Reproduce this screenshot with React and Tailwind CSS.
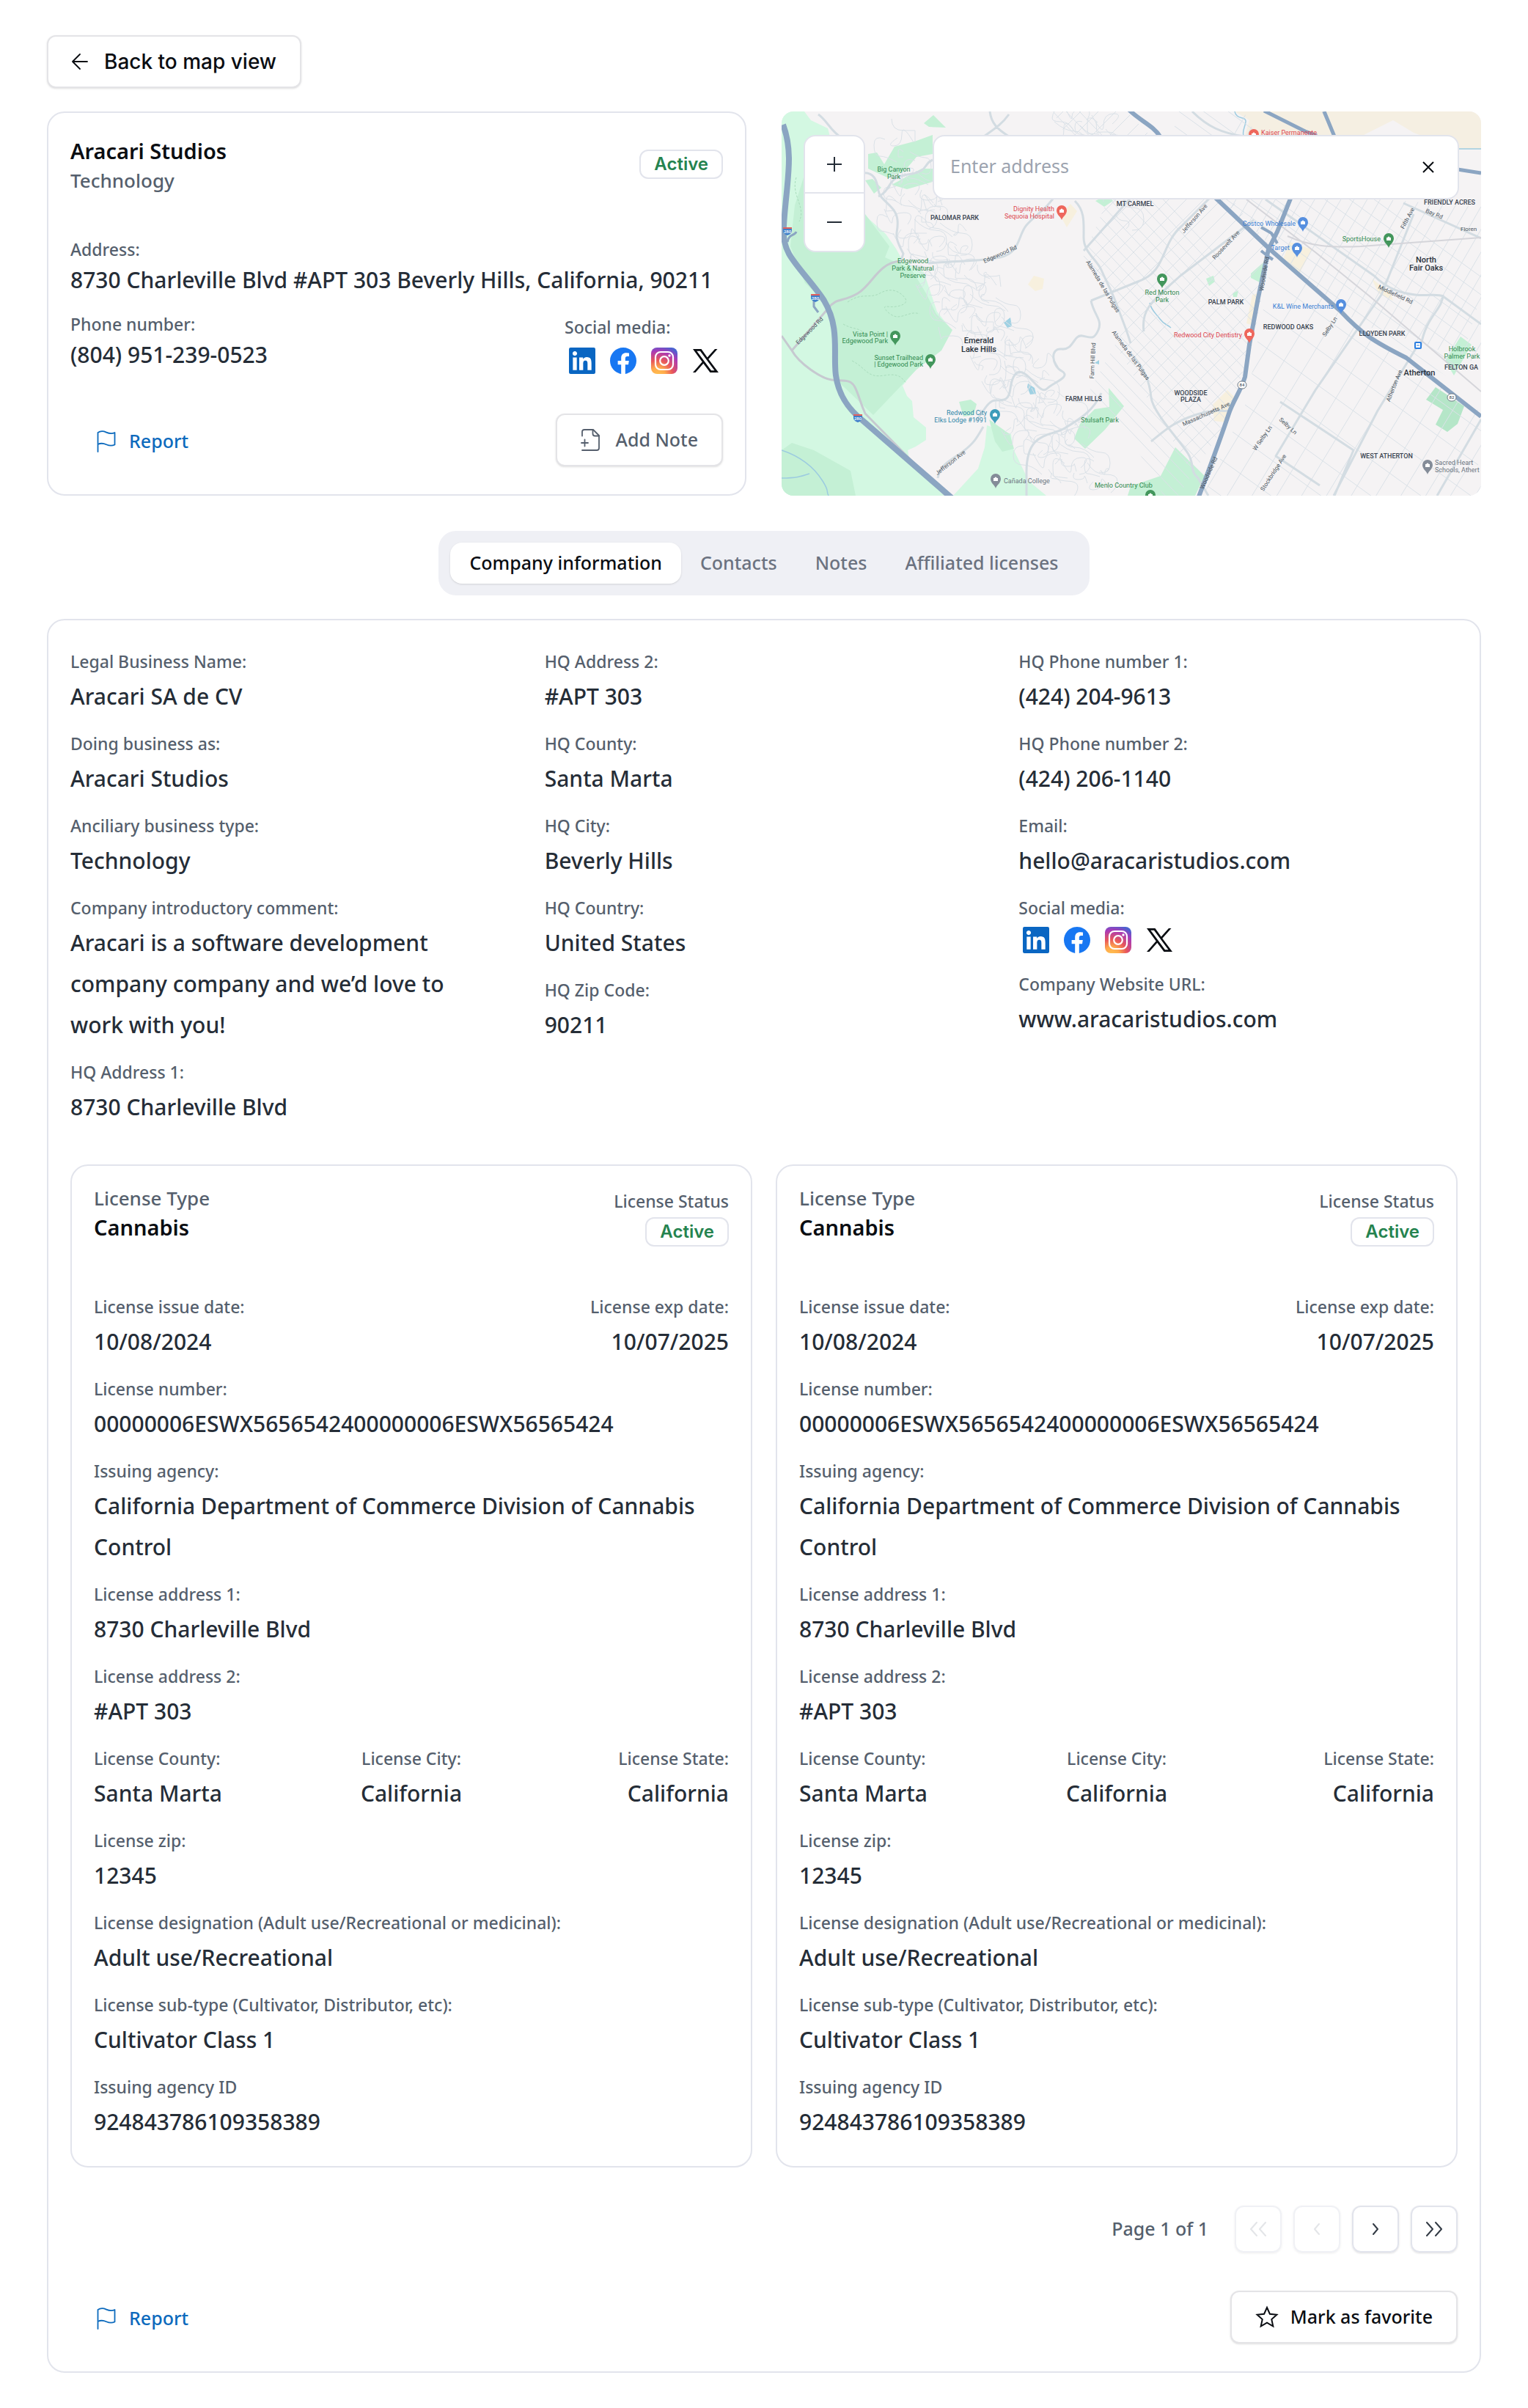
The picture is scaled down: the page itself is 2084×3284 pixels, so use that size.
import { useState } from 'react';

const company = {
    name: 'Aracari Studios',
    type: 'Technology',
    address: '8730 Charleville Blvd #APT 303 Beverly Hills, California, 90211',
    phone: '(804) 951-239-0523',
};

const tabs = ['Company information', 'Contacts', 'Notes', 'Affiliated licenses'];

const firstColumn = [
    ['Legal Business Name:', 'Aracari SA de CV'],
    ['Doing business as:', 'Aracari Studios'],
    ['Anciliary business type:', 'Technology'],
    ['Company introductory comment:', 'Aracari is a software development company company and we’d love to work with you!'],
    ['HQ Address 1:', '8730 Charleville Blvd'],
];

const secondColumn = [
    ['HQ Address 2:', '#APT 303'],
    ['HQ County:', 'Santa Marta'],
    ['HQ City:', 'Beverly Hills'],
    ['HQ Country:', 'United States'],
    ['HQ Zip Code:', '90211'],
];

const thirdColumn = [
    ['HQ Phone number 1:', '(424) 204-9613'],
    ['HQ Phone number 2:', '(424) 206-1140'],
    ['Email:', 'hello@aracaristudios.com'],
];

const license = {
    type: 'Cannabis',
    status: 'Active',
    issued: '10/08/2024',
    expires: '10/07/2025',
    number: '00000006ESWX5656542400000006ESWX56565424',
    agency: 'California Department of Commerce Division of Cannabis Control',
    address1: '8730 Charleville Blvd',
    address2: '#APT 303',
    county: 'Santa Marta',
    city: 'California',
    state: 'California',
    zip: '12345',
    designation: 'Adult use/Recreational',
    subType: 'Cultivator Class 1',
    agencyId: '924843786109358389',
};

const licenses = [{ id: 1, ...license }, { id: 2, ...license }];

/* ---------- icons ---------- */

const ArrowIcon = () => (
    <svg width="22" height="22" viewBox="0 0 22 22" fill="none" stroke="currentColor" strokeWidth="1.8" strokeLinecap="round" strokeLinejoin="round">
        <path d="M21 11H1M11 1 1 11l10 10" />
    </svg>
);

const FlagIcon = () => (
    <svg width="26" height="30" viewBox="0 0 26 30" fill="none" stroke="currentColor" strokeWidth="1.8" strokeLinecap="round" strokeLinejoin="round">
        <path d="M1.5 29V3C5 .6 9 .8 13 2.6S20.5 5 24.5 3v16.5c-4 2-7.500 1.500-11.500-.3s-8-2-11.500-.2" />
    </svg>
);

const NoteIcon = () => (
    <svg width="26" height="30" viewBox="0 0 26 30" fill="none" stroke="currentColor" strokeWidth="1.8" strokeLinecap="round" strokeLinejoin="round">
        <path d="M2 9.500V4a3 3 0 0 1 3-3h12l8 8v17a3 3 0 0 1-3 3H2" />
        <path d="M16.500 1v5.500a3 3 0 0 0 3 3H25M1 19h9M5.500 14.500v9" />
    </svg>
);

const StarIcon = () => (
    <svg width="32" height="32" viewBox="0 0 32 32" fill="none" stroke="currentColor" strokeWidth="2" strokeLinejoin="miter">
        <path d="m16 3 3.900 8.700 9.500 1-7.100 6.400 2 9.400-8.300-4.800-8.300 4.800 2-9.400-7.100-6.400 9.500-1z" />
    </svg>
);

const Chevron = ({ double, left }) => (
    <svg width="24" height="24" viewBox="0 0 24 24" fill="none" stroke="currentColor" strokeWidth="2" strokeLinecap="round" strokeLinejoin="round" className={left ? 'rotate-180' : ''}>
        <path d={double ? 'm2 3 8 9-8 9M14 3l8 9-8 9' : 'm9 5 6 7-6 7'} />
    </svg>
);

const LinkedinIcon = () => (
    <svg width="36" height="36" viewBox="0 0 24 24">
        <rect width="24" height="24" rx="1.5" fill="#0a66c2" />
        <path fill="#fff" d="M20.447 20.452h-3.554v-5.569c0-1.328-.027-3.037-1.852-3.037-1.853 0-2.136 1.445-2.136 2.939v5.667H9.351V9h3.414v1.561h.046c.477-.9 1.637-1.850 3.370-1.850 3.601 0 4.267 2.370 4.267 5.455v6.286zM5.337 7.433c-1.144 0-2.063-.926-2.063-2.065 0-1.138.92-2.063 2.063-2.063 1.140 0 2.064.925 2.064 2.063 0 1.139-.925 2.065-2.064 2.065zm1.782 13.019H3.555V9h3.564v11.452z" />
    </svg>
);

const FacebookIcon = () => (
    <svg width="36" height="36" viewBox="0 0 24 24">
        <path fill="#1877f2" d="M24 12.073c0-6.627-5.373-12-12-12s-12 5.373-12 12c0 5.990 4.388 10.954 10.125 11.854v-8.385H7.078v-3.470h3.047V9.430c0-3.007 1.792-4.669 4.533-4.669 1.312 0 2.686.235 2.686.235v2.953H15.830c-1.491 0-1.956.925-1.956 1.874v2.250h3.328l-.532 3.470h-2.796v8.385C19.612 23.027 24 18.062 24 12.073z" />
    </svg>
);

const InstagramIcon = () => (
    <svg width="36" height="36" viewBox="0 0 36 36" fill="none">
        <defs>
            <radialGradient id="insta" cx="0.25" cy="1.05" r="1.15">
                <stop offset="0" stopColor="#ffc050" />
                <stop offset="0.25" stopColor="#ffaa4c" />
                <stop offset="0.5" stopColor="#e8565a" />
                <stop offset="0.8" stopColor="#a83ab8" />
                <stop offset="1" stopColor="#4a62d0" />
            </radialGradient>
        </defs>
        <rect width="36" height="36" rx="8" fill="url(#insta)" />
        <rect x="6" y="6" width="24" height="24" rx="7" stroke="#fff" strokeWidth="2.2" />
        <circle cx="18" cy="18" r="5.8" stroke="#fff" strokeWidth="2.2" />
        <circle cx="25" cy="11" r="1.7" fill="#fff" />
    </svg>
);

const XIcon = () => (
    <svg width="36" height="36" viewBox="0 0 36 36">
        <path fill="#0a0d12" fillRule="evenodd" d="M1 2h11.500l8.200 11.400L31 2h3.500L22.300 15.800 36 34H24.500l-9.200-12.300L4.500 34H1l12.700-14.500zm5.300 2.700L26 31.300h4.500L10.900 4.700z" />
    </svg>
);

const socials = [
    ['LinkedIn', LinkedinIcon],
    ['Facebook', FacebookIcon],
    ['Instagram', InstagramIcon],
    ['X', XIcon],
];

const SocialLinks = () => (
    <div className="flex gap-2">
        {socials.map(([name, Icon]) => (
            <a key={name} href="#" aria-label={name} className="flex size-12 items-center justify-center">
                <Icon />
            </a>
        ))}
    </div>
);

/* ---------- map ---------- */

// [text, x, y, kind, anchor, rotation]
const mapLabels = [
    ['Big Canyon', 153, 82, 'park'],
    ['Park', 153, 92, 'park'],
    ['PALOMAR PARK', 236, 148, 'area'],
    ['Dignity Health', 372, 136, 'health', 'end'],
    ['Sequoia Hospital', 372, 146, 'health', 'end'],
    ['MT CARMEL', 482, 129, 'area'],
    ['Edgewood', 179, 207, 'park'],
    ['Park & Natural', 179, 217, 'park'],
    ['Preserve', 179, 227, 'park'],
    ['Vista Point |', 145, 307, 'park', 'end'],
    ['Edgewood Park', 145, 316, 'park', 'end'],
    ['Sunset Trailhead', 193, 339, 'park', 'end'],
    ['| Edgewood Park', 193, 348, 'park', 'end'],
    ['Emerald', 269, 316, 'town'],
    ['Lake Hills', 269, 328, 'town'],
    ['FARM HILLS', 412, 395, 'area'],
    ['Stulsaft Park', 434, 424, 'park'],
    ['Redwood City', 280, 414, 'teal', 'end'],
    ['Elks Lodge #1991', 280, 424, 'teal', 'end'],
    ['Cañada College', 303, 507, 'school', 'start'],
    ['Menlo Country Club', 427, 513, 'park', 'start'],
    ['Kaiser Permanente', 654, 32, 'health', 'start'],
    ['Red Morton', 519, 250, 'park'],
    ['Park', 519, 260, 'park'],
    ['Costco Wholesale', 701, 156, 'shop', 'end'],
    ['Target', 693, 189, 'shop', 'end'],
    ['SportsHouse', 817, 177, 'park', 'end'],
    ['North', 879, 206, 'town'],
    ['Fair Oaks', 879, 217, 'town'],
    ['FRIENDLY ACRES', 911, 127, 'area'],
    ['PALM PARK', 606, 263, 'area'],
    ['K&L Wine Merchants', 753, 269, 'shop', 'end'],
    ['REDWOOD OAKS', 691, 297, 'area'],
    ['Redwood City Dentistry', 628, 308, 'health', 'end'],
    ['LLOYDEN PARK', 819, 306, 'area'],
    ['Holbrook', 928, 327, 'park'],
    ['Palmer Park', 928, 337, 'park'],
    ['FELTON GA', 904, 352, 'area', 'start'],
    ['Atherton', 870, 360, 'town'],
    ['WOODSIDE', 558, 387, 'area'],
    ['PLAZA', 558, 396, 'area'],
    ['WEST ATHERTON', 825, 473, 'area'],
    ['Sacred Heart', 891, 482, 'school', 'start'],
    ['Schools, Athert', 891, 492, 'school', 'start'],
    ['Edgewood Rd', 299, 197, 'road', 'middle', -24],
    ['Edgewood Rd', 40, 301, 'road', 'middle', -45],
    ['Alameda de las Pulgas', 436, 240, 'road', 'middle', 59],
    ['Alameda de las Pulgas', 474, 334, 'road', 'middle', 54],
    ['Farm Hill Blvd', 427, 340, 'road', 'middle', -87],
    ['Jefferson Ave', 232, 481, 'road', 'middle', -38],
    ['Jefferson Ave', 565, 148, 'road', 'middle', -49],
    ['Roosevelt Ave', 608, 184, 'road', 'middle', -47],
    ['Bay Rd', 889, 142, 'road', 'middle', 22],
    ['Fifth Ave', 856, 147, 'road', 'middle', -62],
    ['Floren', 926, 163, 'road', 'start'],
    ['Middlefield Rd', 836, 252, 'road', 'middle', 25],
    ['Selby Ln', 750, 295, 'road', 'middle', -57],
    ['Atherton Ave', 838, 375, 'road', 'middle', -68],
    ['Massachusetts Ave', 580, 415, 'road', 'middle', -24],
    ['Selby Ln', 689, 431, 'road', 'middle', 42],
    ['W Selby Ln', 658, 447, 'road', 'middle', -55],
    ['Stockbridge Ave', 673, 494, 'road', 'middle', -57],
    ['Woodside Rd', 585, 494, 'road', 'middle', -66],
    ['Woodside Rd', 661, 222, 'road', 'middle', -80],
];

const labelStyles = {
    park: 'fill-[#2f8a4e] text-[9px]',
    health: 'fill-[#dc4650] text-[9px]',
    shop: 'fill-[#3b7fd4] text-[9px]',
    teal: 'fill-[#2f86a8] text-[9px]',
    school: 'fill-[#6b7480] text-[9px]',
    area: 'fill-[#3a4450] text-[9px] font-medium',
    town: 'fill-[#2a323c] text-[11px] font-medium',
    road: 'fill-[#4b5560] text-[8px]',
};

const pins = [
    [382, 135, '#ee675c'],
    [155, 306, '#43965c'],
    [203, 338, '#43965c'],
    [291, 413, '#3d9cba'],
    [292, 501, '#848c98'],
    [644, 31, '#ee675c'],
    [519, 228, '#43965c'],
    [711, 151, '#568fdf'],
    [703, 186, '#568fdf'],
    [828, 173, '#43965c'],
    [763, 263, '#568fdf'],
    [638, 303, '#ee675c'],
    [881, 482, '#848c98'],
    [503, 523, '#43965c'],
];

const Pin = ({ x, y, color }) => (
    <g transform={`translate(${x} ${y})`}>
        <path d="M0 13C-1.500 8-7 6-7 0a7 7 0 0 1 14 0c0 6-5.500 8-7 13z" fill={color} />
        <path d="M-3 3V-1h1.500a1.500 1.500 0 0 1 3 0H3v4z" fill="#fff" />
    </g>
);

const range = (n) => Array.from({ length: n }, (_, i) => i);

// Parallel streets running at a fixed slope through one part of town
const streets = (count, x, y, dx, dy, stepX, stepY) =>
    range(count).map((i) => `M${x + i * stepX} ${y + i * stepY}l${dx} ${dy}`).join('');

// Short winding lanes of the hill neighbourhoods
const lanes = range(170).map((i) => {
    const x = 150 + ((i * 67) % 310);
    const y = 10 + ((i * 109) % 500);
    const a = Math.round(Math.sin(i * 1.7) * 16);
    const b = Math.round(Math.cos(i * 2.3) * 16);
    return `M${x} ${y}q${a} ${b} ${a + b} ${b}t${b} ${a}t${-a} ${b}`;
}).join('');

const MapDrawing = () => (
    <svg viewBox="0 0 954 524" preserveAspectRatio="xMidYMid slice" className="absolute inset-0 size-full font-[Roboto,sans-serif]" role="img" aria-label="Map of Redwood City">
        <defs>
            <clipPath id="west">
                <path d="M370 0h100l40 40 100 75 57 70-24 130-40 115-62 94h-20l-40-70-60-75 50-90-60-90 30-70z" />
            </clipPath>
            <clipPath id="east">
                <path d="m670 195 95 85 90 60 99 70v114H575l60-130z" />
            </clipPath>
            <clipPath id="north">
                <path d="M470 0h160l60 110 264 20v260L760 270 600 120z" />
            </clipPath>
        </defs>
        <rect width="954" height="524" fill="#f5f3f4" />
        <path d="M0 0h31l9 12 23 11 3 11 48 30v78l28 25 14 20 10 18 28 14 18 54 20 25-15 28-34 26-18 22 6 14 7 7 2 22 17 14v17l-14 9-11 5 2 11 57 51H0z" fill="#d3f8e2" />
        <path d="m234 524 34-37 9-29 3-30 33 12 2 18 22 46 24 20z" fill="#d3f8e2" />
        <g fill="#c4f0d5">
            <path d="m18 128 12-38 84 50 33 44-6 15 36 16 20 33 14 28 22 22-15 28-34 26-59 62-46-44-10-101-37-35-20-50z" />
            <path d="m118 58 12-2 10 16 14-24 30-8 22-8v26l-22 4-17 20-23 8-26-12zM150 100l41-22h15v18l-35 10zM194 16l13-11 17 17-23-1zM114 94l10-2 12 12-10 8z" />
            <path d="m0 462 14-10 30 10 50 28 7 34H0zM446 377l21 25-26 32-27 26-15-14 8-20 20-20 20-3zM242 396l16-3 8 6-4 15-14 2zM283 420l28 20 6 20-16 4-10-14zM428 122l16-8 8 8-12 8z" />
            <path d="m537 458 40 39-13 27h-92l4-13 41-14zM926 307l15 11-24 42-12-20zM640 221l18-16-2 30-16-8zM671 21l20-4 20 10-10 8h-34zM579 228l10-4 2 8-8 6zM615 248l8-4-2 9h-5z" />
        </g>
        <path d="m892 376 39 26-9 24-14 11-16-10 10-20-23-14z" fill="#b5e6c8" />
        <path d="M618 0h336v51h-32l-60-22-28-17-40 20H632l6-20z" fill="#f5efe2" />
        <path d="m693 178 30 10-17 34-23-18zM642 250l8-2-4 45-12-4zM588 400l20-20 10 10-12 34-16-2zM380 142l14-16 9 10-14 22zM336 236l8-12 14 4-2 14-10 3zM805 228l26 20 3 10-20-10z" fill="#f7f0de" />
        <path d="m303 288 9-7 2 12-6 2zM336 371l9 6 2 8-8 1-4-10zM427 343l6-4v6z" fill="#9fd1e3" />
        <path d="M618 0c2 12 16 6 15 14s-5 12-3 19M502 261c2 10 8 14 14 22s8 6 15 12M0 462c30 10 46 26 56 42s4 12 8 20M0 500c20 0 26-2 38-6M922 51h32" fill="none" stroke="#9ccbe0" strokeWidth="1.5" />

        <g fill="none" stroke="#dae1e7">
            <path d={lanes} strokeWidth="1" />
            <g clipPath="url(#west)" strokeWidth="1">
                <path d={streets(44, 330, -80, 400, 420, -2, 17)} />
                <path d={streets(46, 300, 60, 300, -300, 9, 15)} />
            </g>
            <g clipPath="url(#east)" strokeWidth="1">
                <path d={streets(12, 600, 180, 360, 260, -10, 42)} />
                <path d={streets(15, 540, 524, 200, -330, 29, 8)} />
            </g>
            <g clipPath="url(#north)" strokeWidth="1">
                <path d={streets(16, 560, -60, 400, 290, -6, 20)} />
                <path d={streets(32, 520, 200, 150, -260, 15, 5)} />
            </g>
        </g>
        <path d="M20 90c-8 24 14 40 4 60M90 260c20-14 30-4 44-12s26-4 34 6-14 14-24 12 4 14 14 14 20-8 30-4M84 290c14 8 20 4 28 12M96 340c20 10 20 24 44 20s24 6 30 10" fill="none" stroke="#a9dcbc" strokeWidth="1" strokeDasharray="3 2" />

        <g fill="none" stroke="#d3dce2" strokeWidth="3" strokeLinejoin="round">
            <path d="M50 4c12 8 16 22 32 32M110 84c16-2 20 10 22 24s24 20 26 40-8 16 8 46l-4 12M132 116c20-10 10-26 40-30s20-14 34-20M200 207c40-4 70-2 98-8s24-30 36-44 30-24 40-42" />
            <path d="M284 0c2 16 10 24 26 34M310 4c-10 14-20 20-34 30M400 122c14 14 12 30 12 50s18 30 24 44 14 28 22 50 12 30 18 50M412 190l80-90 50-60M422 258l64-26c40-14 30-50 60-76l80-80M422 258c4 20 16 26 10 40s-10 10-22 8-12 20-28 18-14 22 0 30-12 16-20 24-18-12-30-20-18 4-20 20-8 16-20 16-18 20-28 28M436 384c-10 24-30 36-50 48s-52 4-52 60v32" />
            <path d="M213 500c4-20 18-24 34-36s20-20 28-34M476 330c20 20 26 40 28 60s40 60 50 76 2 24 14 34l14 24M504 450c20-16 30-26 60-36s34-4 46-6M494 300c-4-30 10-40 50-76l100-76M660 120l148 104c20 20 40 24 56 26s30-2 38 2l52 38M848 125l106 48M862 140l-44 110-90 130-54 90 60 40M680 396l100 66-26 62M867 320l-54 88-60 116M954 420l-60 104M560 0c20 20 40 30 72 34M902 250c0 20-24 30-30 70" />
        </g>
        <g fill="none" stroke="#d5d5da" strokeWidth="2">
            <path d="m634 120 94 72 74 60 152 130M690 170c30 14 60 16 100 14l164-12M738 0l14 32" />
        </g>
        <path d="M162 204c-30 2-38 32-58 44s-30 6-40 20L14 326 0 306M14 326c10 18 40 38 54 40s26-2 32 10 6 18 14 36l110 112" fill="none" stroke="#c6c9d0" strokeWidth="3" />

        <g fill="none" stroke="#8ba5c2" strokeLinejoin="round">
            <path d="M2 18c12 32 8 62 4 102s-6 56 4 74 34 42 48 64c22 37 12 72 16 102s20 48 36 61l122 106" strokeWidth="8" />
            <path d="M44 254v12l6 8M8 178c2-12 10-8 12-14" strokeWidth="3" />
            <path d="M474-2c14 14 34 22 42 36M590 116l76 72 96 84c30 32 46 42 90 64l102 80" strokeWidth="6" />
            <path d="m696 114-20 50-12 24-14 66-12 64-6 44c-6 20-16 32-22 50s-14 42-42 116" strokeWidth="6" />
            <path d="m654 158 14 8 8 14M654 190l10 8 6 4" strokeWidth="4" />
            <path d="m658-1 56 28 16 6M740 0l14 34M922 79l32 5" strokeWidth="5" />
        </g>

        {[[8, 163], [46, 254], [104, 418]].map(([x, y]) => (
            <g key={y}>
                <path d={`M${x - 6} ${y - 5}h12v5c0 3-3 5-6 6-3-1-6-3-6-6z`} fill="#3f7fca" />
                <path d={`M${x - 6} ${y - 5}h12v2h-12z`} fill="#e0605e" />
                <text x={x} y={y + 3} textAnchor="middle" className="fill-white text-[6px] font-medium">280</text>
            </g>
        ))}
        {[[628, 373, '84'], [914, 390, '82']].map(([x, y, n]) => (
            <g key={n}>
                <rect x={x - 6} y={y - 5} width="12" height="10" rx="5" fill="#fff" stroke="#6f7a86" />
                <text x={x} y={y + 2} textAnchor="middle" className="fill-[#4b5560] text-[6px] font-medium">{n}</text>
            </g>
        ))}
        <rect x="864" y="315" width="8" height="8" rx="1" fill="#fff" stroke="#2a7de0" strokeWidth="2" />
        <path d="M866 319h4" stroke="#2a7de0" />
        {pins.map(([x, y, color]) => <Pin key={`${x}-${y}`} x={x} y={y} color={color} />)}
        {mapLabels.map(([text, x, y, kind, anchor = 'middle', angle = 0]) => (
            <text
                key={`${text}-${x}-${y}`}
                x={x}
                y={y}
                textAnchor={anchor}
                transform={angle ? `rotate(${angle} ${x} ${y})` : undefined}
                className={labelStyles[kind]}
            >
                {text}
            </text>
        ))}
    </svg>
);

const MapPanel = () => {
    const [query, setQuery] = useState('');

    return (
        <div className="relative overflow-hidden rounded-2xl">
            <MapDrawing />
            <div className="absolute inset-x-[30px] top-8 flex items-start justify-between gap-[92px]">
                <div className="w-[84px] shrink-0 divide-y-2 divide-[#e2e4ec] overflow-hidden rounded-2xl border-2 border-[#e2e4ec] bg-white text-[#252d37]">
                    <button type="button" aria-label="Zoom in" className="flex h-[78px] w-full items-center justify-center">
                        <svg width="20" height="20" viewBox="0 0 20 20" stroke="currentColor" strokeWidth="2"><path d="M0 10h20M10 0v20" /></svg>
                    </button>
                    <button type="button" aria-label="Zoom out" className="flex h-[78px] w-full items-center justify-center">
                        <svg width="20" height="20" viewBox="0 0 20 20" stroke="currentColor" strokeWidth="2"><path d="M0 10h20" /></svg>
                    </button>
                </div>
                <div className="flex h-[88px] flex-1 items-center rounded-2xl border-2 border-[#e2e4ec] bg-white pr-8 pl-[22px]">
                    <input
                        type="text"
                        aria-label="Address"
                        placeholder="Enter address"
                        value={query}
                        onChange={(e) => setQuery(e.target.value)}
                        className="min-w-0 flex-1 bg-transparent pb-0.5 text-[25px] text-[#252d37] outline-none placeholder:text-[#9ca3af]"
                    />
                    <button type="button" aria-label="Clear" onClick={() => setQuery('')} className="text-[#0a0d12]">
                        <svg width="16" height="16" viewBox="0 0 16 16" fill="none" stroke="currentColor" strokeWidth="2"><path d="m1 1 14 14M15 1 1 15" /></svg>
                    </button>
                </div>
            </div>
        </div>
    );
};

/* ---------- shared pieces ---------- */

const Badge = ({ children }) => (
    <span className="flex h-10 items-center rounded-xl border-2 border-[#e2e4ec] px-[18px] font-[Inter,sans-serif] text-[24px] font-semibold text-[#25834f]">
        {children}
    </span>
);

const Label = ({ children }) => (
    <dt className="text-[23px] leading-[40px] font-medium text-[#555f6d]">{children}</dt>
);

const Field = ({ label, value }) => (
    <div>
        <Label>{label}</Label>
        <dd className="text-[30px] leading-[56px] font-medium text-[#252d37]">{value}</dd>
    </div>
);

const OutlineButton = ({ className = '', children }) => (
    <button type="button" className={`flex h-[72px] items-center rounded-xl border-2 border-[#e4e4e7] bg-white shadow-sm ${className}`}>
        {children}
    </button>
);

const ReportButton = () => (
    <button type="button" className="flex h-[72px] items-center gap-[18px] px-9 pt-1 text-[25px] font-medium text-[#0c6abd]">
        <FlagIcon />
        Report
    </button>
);

const LicenseCard = ({ license }) => (
    <article className="rounded-3xl border-2 border-[#e2e4ec] px-[30px] pt-6 pb-8">
        <div className="mb-[62px] flex items-start justify-between">
            <div>
                <p className="text-[26px] leading-[40px] font-medium text-[#555f6d]">License Type</p>
                <h2 className="text-[29px] leading-[40px] font-semibold text-[#0a0d12]">{license.type}</h2>
            </div>
            <div className="flex flex-col items-end gap-0.5 pt-1">
                <p className="text-[23px] leading-[40px] font-medium text-[#555f6d]">License Status</p>
                <Badge>{license.status}</Badge>
            </div>
        </div>
        <dl className="flex flex-col gap-4">
            <div className="grid grid-cols-2">
                <Field label="License issue date:" value={license.issued} />
                <div className="text-right">
                    <Field label="License exp date:" value={license.expires} />
                </div>
            </div>
            <Field label="License number:" value={license.number} />
            <Field label="Issuing agency:" value={license.agency} />
            <Field label="License address 1:" value={license.address1} />
            <Field label="License address 2:" value={license.address2} />
            <div className="grid grid-cols-3">
                <Field label="License County:" value={license.county} />
                <div className="text-center">
                    <Field label="License City:" value={license.city} />
                </div>
                <div className="text-right">
                    <Field label="License State:" value={license.state} />
                </div>
            </div>
            <Field label="License zip:" value={license.zip} />
            <Field label="License designation (Adult use/Recreational or medicinal):" value={license.designation} />
            <Field label="License sub-type (Cultivator, Distributor, etc):" value={license.subType} />
            <Field label="Issuing agency ID" value={license.agencyId} />
        </dl>
    </article>
);

const PageButton = ({ label, disabled, children }) => (
    <button
        type="button"
        aria-label={label}
        disabled={disabled}
        className="flex size-16 items-center justify-center rounded-xl border-2 border-[#e2e4ec] text-[#333b45] shadow-sm disabled:text-[#c9cdd3] disabled:opacity-50"
    >
        {children}
    </button>
);

const App = () => {
    const [activeTab, setActiveTab] = useState(tabs[0]);

    return (
        <main className="min-h-screen bg-white px-16 pt-12 pb-12 font-['Noto_Sans',sans-serif]">
            <OutlineButton className="gap-[22px] px-8 font-[Inter,sans-serif] text-[28px] font-medium text-[#0a0d12]">
                <ArrowIcon />
                Back to map view
            </OutlineButton>

            <div className="mt-8 grid grid-cols-2 gap-12">
                <section className="rounded-3xl border-2 border-[#e2e4ec] px-[30px] pt-8 pb-[38px]">
                    <div className="flex items-start justify-between">
                        <div>
                            <h1 className="text-[29px] leading-[40px] font-semibold text-[#0a0d12]">{company.name}</h1>
                            <p className="text-[26px] leading-[40px] font-medium text-[#555f6d]">{company.type}</p>
                        </div>
                        <div className="pt-[18px]">
                            <Badge>Active</Badge>
                        </div>
                    </div>
                    <dl className="mt-[54px]">
                        <Label>Address:</Label>
                        <dd className="text-[30px] leading-[44px] font-medium text-[#252d37]">{company.address}</dd>
                    </dl>
                    <div className="mt-[18px] flex justify-between">
                        <dl>
                            <Label>Phone number:</Label>
                            <dd className="text-[30px] leading-[44px] font-medium text-[#252d37]">{company.phone}</dd>
                        </dl>
                        <dl className="pt-1">
                            <Label>Social media:</Label>
                            <dd className="pt-0.5"><SocialLinks /></dd>
                        </dl>
                    </div>
                    <div className="mt-12 flex items-center justify-between">
                        <ReportButton />
                        <OutlineButton className="gap-[22px] px-8 text-[25px] font-medium text-[#555f6d]">
                            <NoteIcon />
                            Add Note
                        </OutlineButton>
                    </div>
                </section>
                <MapPanel />
            </div>

            <div className="mt-12 flex justify-center">
                <div role="tablist" className="flex rounded-3xl bg-[#eff0f5] p-4">
                    {tabs.map((tab) => (
                        <button
                            key={tab}
                            type="button"
                            role="tab"
                            aria-selected={tab === activeTab}
                            onClick={() => setActiveTab(tab)}
                            className={`h-14 rounded-2xl px-[26px] text-[25px] font-medium ${tab === activeTab ? 'bg-white text-[#0a0d12] shadow-sm' : 'text-[#6b7280]'}`}
                        >
                            {tab}
                        </button>
                    ))}
                </div>
            </div>

            <section className="mt-8 rounded-3xl border-2 border-[#e2e4ec] px-[30px] pt-9 pb-[38px]">
                <div className="grid grid-cols-3 gap-12">
                    <dl className="flex flex-col gap-4 pr-10">
                        {firstColumn.map(([label, value]) => <Field key={label} label={label} value={value} />)}
                    </dl>
                    <dl className="flex flex-col gap-4">
                        {secondColumn.map(([label, value]) => <Field key={label} label={label} value={value} />)}
                    </dl>
                    <dl className="flex flex-col gap-4">
                        {thirdColumn.map(([label, value]) => <Field key={label} label={label} value={value} />)}
                        <div>
                            <Label>Social media:</Label>
                            <dd><SocialLinks /></dd>
                        </div>
                        <Field label="Company Website URL:" value="www.aracaristudios.com" />
                    </dl>
                </div>

                <div className="mt-[50px] grid grid-cols-2 gap-8">
                    {licenses.map((item) => <LicenseCard key={item.id} license={item} />)}
                </div>

                <div className="mt-[52px] flex items-center justify-end gap-4">
                    <span className="mr-5 text-[25px] font-medium text-[#555f6d]">Page 1 of 1</span>
                    <PageButton label="First page" disabled><Chevron double left /></PageButton>
                    <PageButton label="Previous page" disabled><Chevron left /></PageButton>
                    <PageButton label="Next page"><Chevron /></PageButton>
                    <PageButton label="Last page"><Chevron double /></PageButton>
                </div>

                <div className="mt-[52px] flex items-center justify-between">
                    <ReportButton />
                    <OutlineButton className="gap-4 px-8 text-[25px] font-medium text-[#0a0d12]">
                        <StarIcon />
                        Mark as favorite
                    </OutlineButton>
                </div>
            </section>
        </main>
    );
};

export default App;
